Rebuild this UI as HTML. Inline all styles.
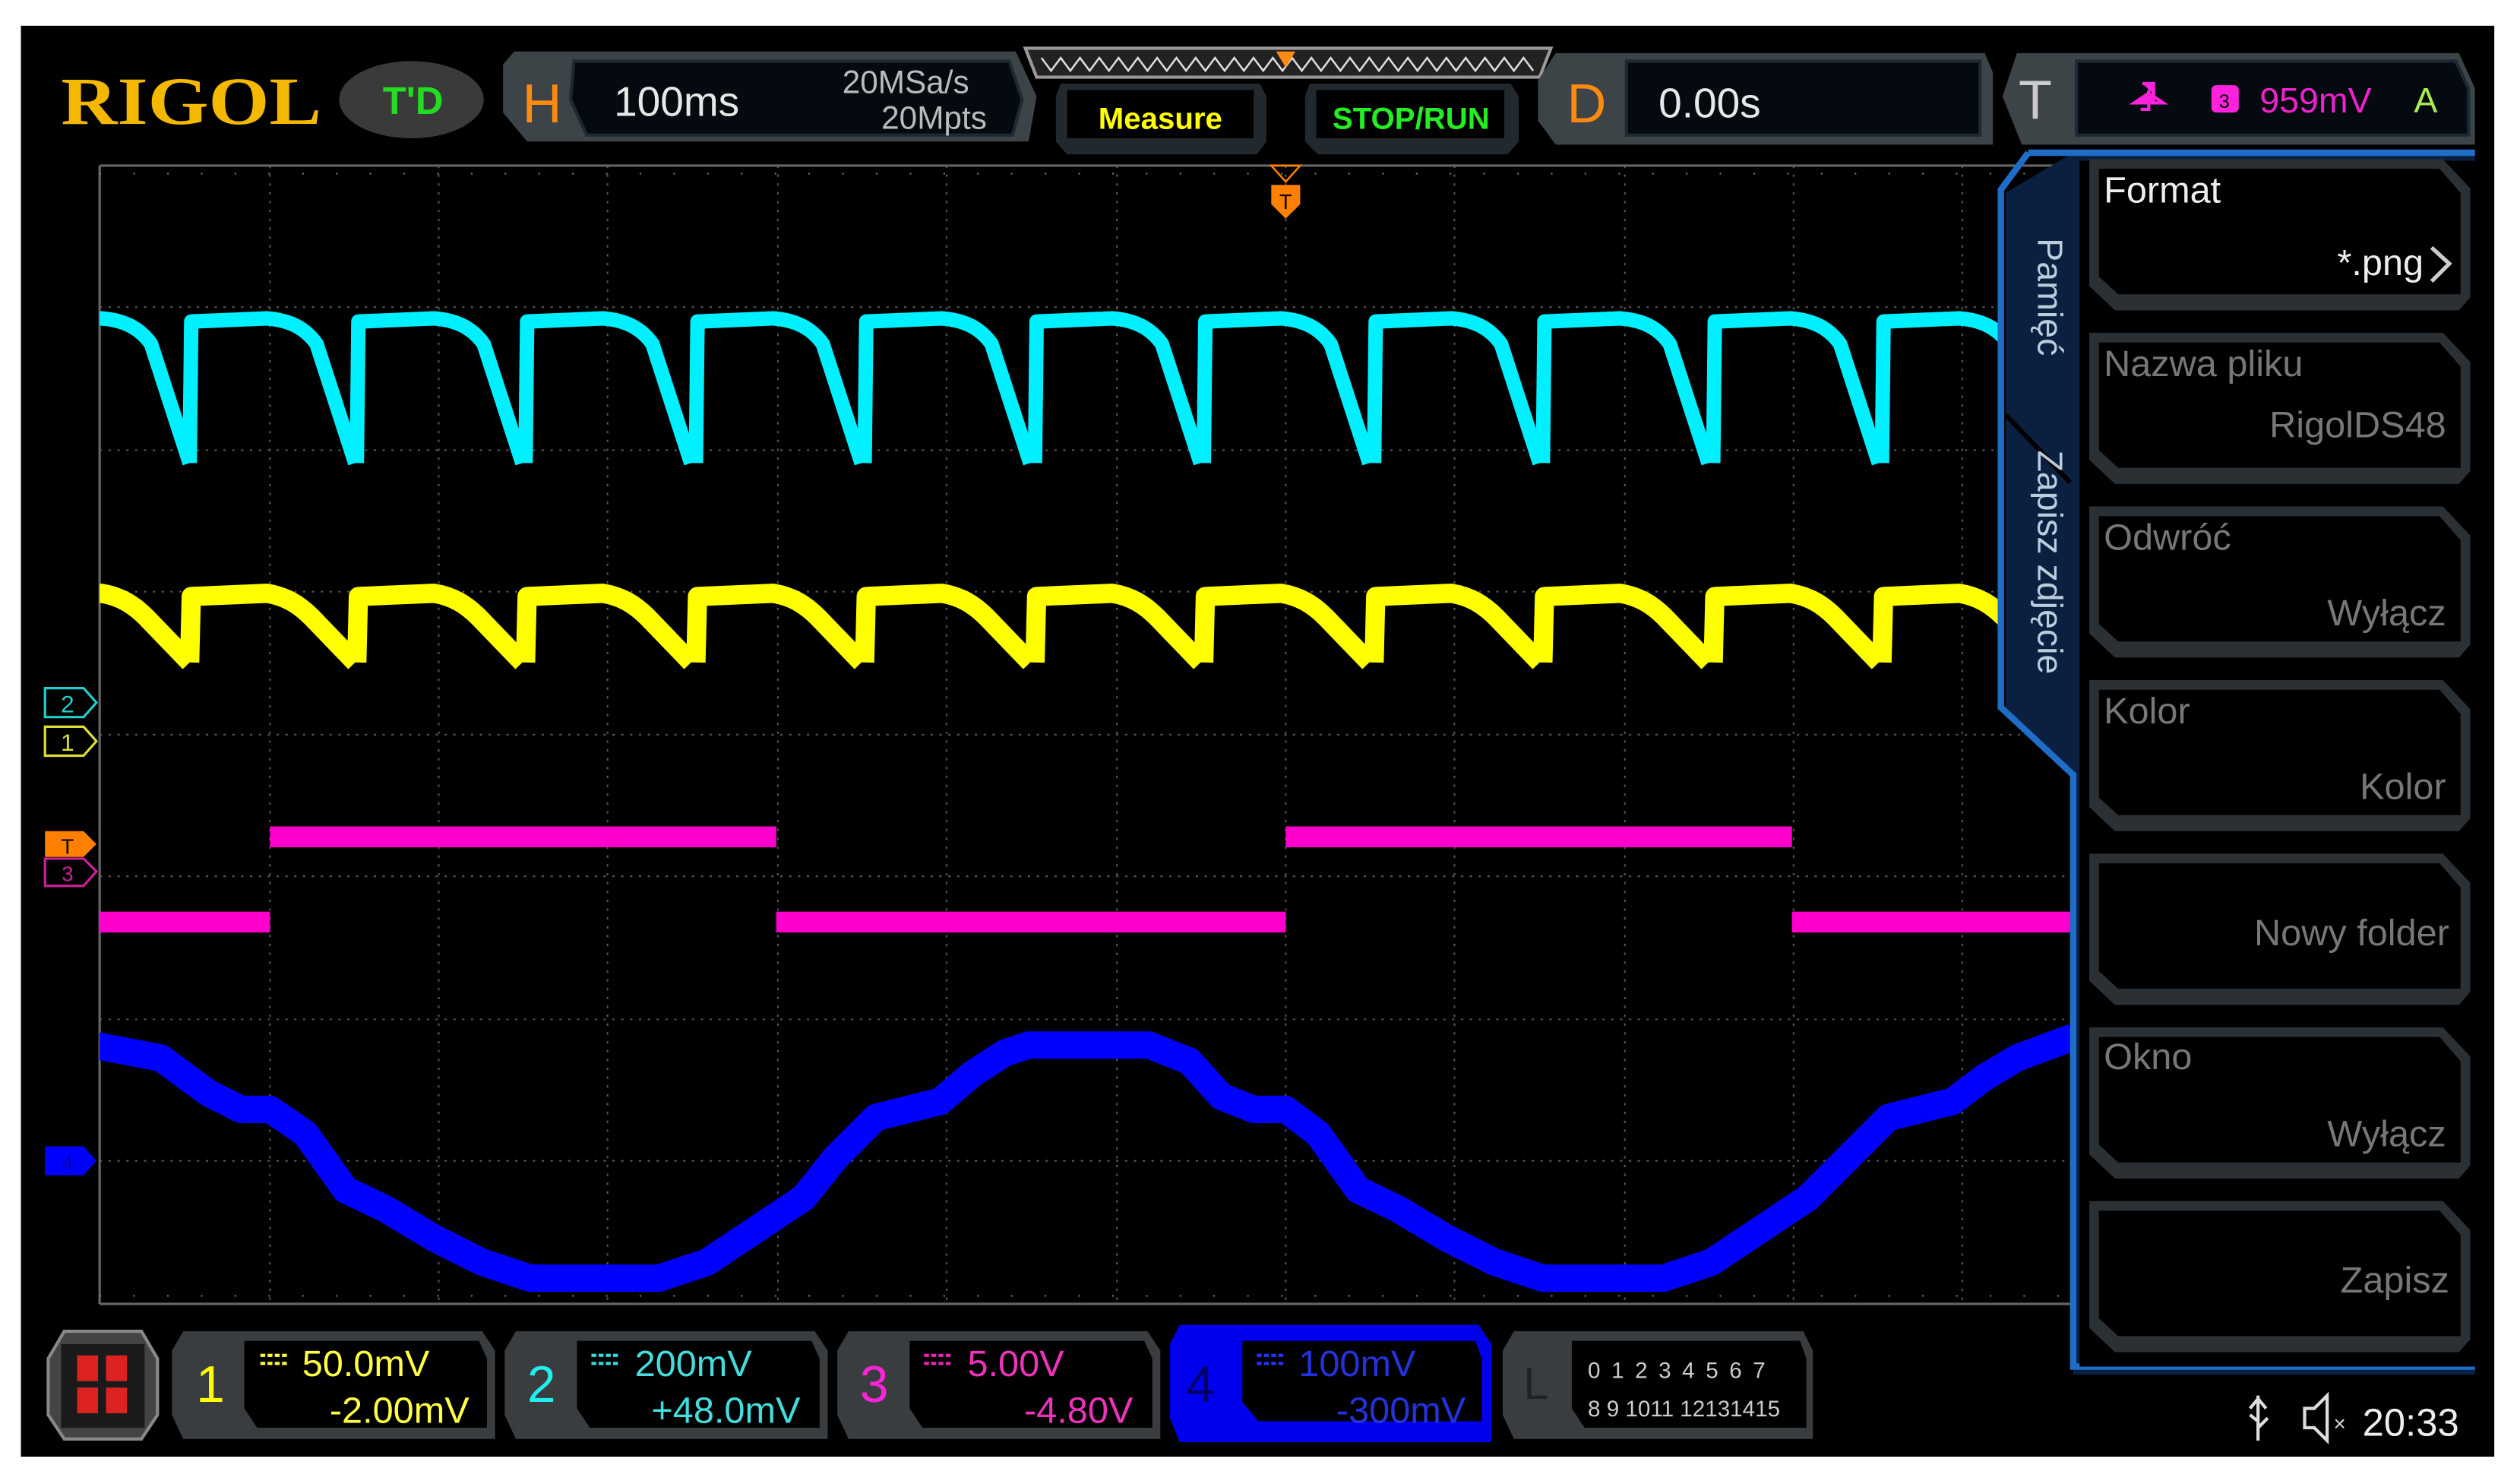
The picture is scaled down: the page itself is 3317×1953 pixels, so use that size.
<!DOCTYPE html>
<html><head><meta charset="utf-8"><style>
html,body{margin:0;padding:0;background:#fff;width:3317px;height:1953px;overflow:hidden}
svg{display:block}
text{font-family:"Liberation Sans",sans-serif}
</style></head><body>
<svg width="3317" height="1953" viewBox="0 0 1568 923" preserveAspectRatio="none" xmlns="http://www.w3.org/2000/svg">
<defs>
<clipPath id="gc"><rect x="62" y="103" width="1183" height="708"/></clipPath>
<clipPath id="gc2"><rect x="62" y="103" width="1226" height="708"/></clipPath>
<path id="cy" d="M0,288 L1,200 L48,198 C62,199 72,204 79,214 L103,288" fill="none" stroke="#00f0ff" stroke-width="9" stroke-linejoin="round"/>
<path id="ye" d="M0,412 L1,371 L48,369 C60,371 68,376 76,384 L103,412" fill="none" stroke="#ffff00" stroke-width="12" stroke-linejoin="round"/>
</defs>
<rect x="0" y="0" width="1568" height="923" fill="#fff"/>
<rect x="13" y="16" width="1539" height="890" fill="#000"/>

<g stroke="#555" stroke-width="1" stroke-dasharray="1.5,4">
<line x1="62" y1="191" x2="1288" y2="191"/><line x1="62" y1="280" x2="1288" y2="280"/>
<line x1="62" y1="368" x2="1288" y2="368"/><line x1="62" y1="457" x2="1288" y2="457"/>
<line x1="62" y1="545" x2="1288" y2="545"/><line x1="62" y1="634" x2="1288" y2="634"/>
<line x1="62" y1="722" x2="1288" y2="722"/>
<line x1="168" y1="103" x2="168" y2="811"/><line x1="273" y1="103" x2="273" y2="811"/>
<line x1="378" y1="103" x2="378" y2="811"/><line x1="484" y1="103" x2="484" y2="811"/>
<line x1="589" y1="103" x2="589" y2="811"/><line x1="695" y1="103" x2="695" y2="811"/>
<line x1="800" y1="103" x2="800" y2="811"/><line x1="905" y1="103" x2="905" y2="811"/>
<line x1="1011" y1="103" x2="1011" y2="811"/><line x1="1116" y1="103" x2="1116" y2="811"/>
<line x1="1221" y1="103" x2="1221" y2="811"/>
</g>
<g stroke="#666" stroke-width="1.5">
<line x1="62" y1="103" x2="1288" y2="103"/><line x1="62" y1="811" x2="1288" y2="811"/>
<line x1="62" y1="103" x2="62" y2="811"/>
</g>
<g stroke="#777" stroke-width="1" stroke-dasharray="1,20">
<line x1="62" y1="108" x2="1288" y2="108"/><line x1="62" y1="806" x2="1288" y2="806"/>
</g>

<g clip-path="url(#gc)">
<use href="#cy" x="15"/><use href="#cy" x="118"/><use href="#cy" x="222"/><use href="#cy" x="327"/><use href="#cy" x="433"/><use href="#cy" x="538"/><use href="#cy" x="644"/><use href="#cy" x="749"/><use href="#cy" x="855"/><use href="#cy" x="960"/><use href="#cy" x="1066"/><use href="#cy" x="1171"/>
<use href="#ye" x="15"/><use href="#ye" x="118"/><use href="#ye" x="222"/><use href="#ye" x="327"/><use href="#ye" x="433"/><use href="#ye" x="538"/><use href="#ye" x="644"/><use href="#ye" x="749"/><use href="#ye" x="855"/><use href="#ye" x="960"/><use href="#ye" x="1066"/><use href="#ye" x="1171"/>
</g>

<g fill="#ff00cc">
<rect x="62" y="567" width="106" height="13"/>
<rect x="168" y="514" width="315" height="13"/>
<rect x="483" y="567" width="317" height="13"/>
<rect x="800" y="514" width="315" height="13"/>
<rect x="1115" y="567" width="173" height="13"/>
</g>

<g clip-path="url(#gc2)">
<polyline fill="none" stroke="#0000ff" stroke-width="17" stroke-linejoin="round" points="58,650 100,658 130,680 150,690 168,690 190,705 215,740 240,752 270,770 300,785 330,795 410,795 440,785 470,765 500,745 520,720 545,695 565,690 585,685 605,668 625,655 640,650 715,650 740,660 760,682 780,690 800,690 820,705 845,740 870,752 900,770 930,785 960,795 1035,795 1065,785 1095,765 1125,745 1150,720 1175,695 1195,690 1215,685 1235,670 1255,658 1290,645"/>
</g>

<g font-size="15" text-anchor="middle">
<path d="M28,428 H52 L60,437 L52,446 H28 Z" fill="#000" stroke="#22cccc" stroke-width="1.5"/><text x="42" y="443" fill="#22cccc">2</text>
<path d="M28,452 H52 L60,461 L52,470 H28 Z" fill="#000" stroke="#dddd33" stroke-width="1.5"/><text x="42" y="467" fill="#dddd33">1</text>
<path d="M28,517 H52 L60,525 L52,533 H28 Z" fill="#ff8000"/><text x="42" y="531" fill="#000" font-size="13">T</text>
<path d="M28,534 H52 L60,542 L52,551 H28 Z" fill="#000" stroke="#cc2299" stroke-width="1.5"/><text x="42" y="548" fill="#cc2299" font-size="13">3</text>
<path d="M28,713 H52 L60,722 L52,731 H28 Z" fill="#0000ff"/><text x="42" y="728" fill="#0000aa" font-size="13">4</text>
</g>
<path d="M791,103 H809 L800,113 Z" fill="none" stroke="#ff8000" stroke-width="1.2"/>
<path d="M791,115 H809 V127 L800,136 L791,127 Z" fill="#ff8000"/>
<text x="800" y="130" fill="#000" font-size="13" text-anchor="middle">T</text>

<text x="38" y="77" fill="#f5b800" style="font-family:'Liberation Serif',serif;font-weight:bold" font-size="42" textLength="162" lengthAdjust="spacingAndGlyphs">RIGOL</text>
<ellipse cx="256" cy="62" rx="45" ry="24" fill="#3a3a3a"/>
<text x="257" y="71" fill="#22dd22" font-size="24" text-anchor="middle" font-weight="bold">T'D</text>

<path d="M320,32 H632 L645,60 L640,88 H328 L313,70 V40 Z" fill="#3c4448"/>
<path d="M357,38 H628 L636,62 L630,84 H365 L355,62 Z" fill="#050a10" stroke="#1e2a33" stroke-width="2"/>
<text x="325" y="76" fill="#ff8a10" font-size="34">H</text>
<text x="382" y="72" fill="#e8e8e8" font-size="26">100ms</text>
<text x="603" y="58" fill="#bbb" font-size="20" text-anchor="end">20MSa/s</text>
<text x="614" y="80" fill="#bbb" font-size="20" text-anchor="end">20Mpts</text>

<path d="M638,30 H965 L958,48 H645 Z" fill="#222" stroke="#999" stroke-width="2"/>
<polyline fill="none" stroke="#ddd" stroke-width="1.2" points="648,36 654,44 660,36 666,44 672,36 678,44 684,36 690,44 696,36 702,44 708,36 714,44 720,36 726,44 732,36 738,44 744,36 750,44 756,36 762,44 768,36 774,44 780,36 786,44 792,36 798,44 804,36 810,44 816,36 822,44 828,36 834,44 840,36 846,44 852,36 858,44 864,36 870,44 876,36 882,44 888,36 894,44 900,36 906,44 912,36 918,44 924,36 930,44 936,36 942,44 948,36 954,44"/>
<path d="M794,32 H806 L800,42 Z" fill="#ff8a10"/>

<path d="M660,52 H784 L788,60 V88 L782,96 H664 L657,88 V60 Z" fill="#22292e"/>
<path d="M664,56 H780 V86 H664 Z" fill="#000"/>
<text x="722" y="80" fill="#ffff00" font-size="19" font-weight="bold" text-anchor="middle">Measure</text>
<path d="M815,52 H940 L945,60 V88 L938,96 H820 L812,88 V60 Z" fill="#22292e"/>
<path d="M819,56 H936 V86 H819 Z" fill="#000"/>
<text x="878" y="80" fill="#22ee22" font-size="19" font-weight="bold" text-anchor="middle">STOP/RUN</text>

<path d="M968,33 H1235 L1240,45 V90 H968 L957,75 V50 Z" fill="#3c4448"/>
<path d="M1012,38 H1232 V84 H1012 Z" fill="#050a10" stroke="#1e2a33" stroke-width="2"/>
<text x="975" y="76" fill="#ff8a10" font-size="34">D</text>
<text x="1032" y="73" fill="#e8e8e8" font-size="26">0.00s</text>

<path d="M1255,33 H1530 L1540,55 V90 H1258 L1246,60 Z" fill="#3c4448"/>
<path d="M1292,38 H1528 L1536,55 V84 H1292 Z" fill="#050a10" stroke="#1e2a33" stroke-width="2"/>
<text x="1256" y="74" fill="#ccc" font-size="34">T</text>
<path d="M1333,52 H1340 V64 H1346 M1328,64 L1337,58 L1346,64 Z" fill="#ff22dd" stroke="#ff22dd" stroke-width="2"/>
<path d="M1332,68 H1337 V56" fill="none" stroke="#ff22dd" stroke-width="2"/>
<rect x="1376" y="53" width="17" height="17" rx="3" fill="#ff22dd"/>
<text x="1384" y="67" fill="#000" font-size="12" text-anchor="middle">3</text>
<text x="1406" y="70" fill="#ee22cc" font-size="22">959mV</text>
<text x="1502" y="70" fill="#aaee55" font-size="22">A</text>

<path d="M1290,95 H1540 V100 H1294 V850 H1540 V855 H1290 V480 L1248,440 V120 Z" fill="#0b2040"/>
<path d="M1262,95 L1245,118 V440 L1290,482 V850 H1540" fill="none" stroke="#1e6ec8" stroke-width="4"/>
<line x1="1262" y1="95" x2="1540" y2="95" stroke="#1e6ec8" stroke-width="4"/>
<line x1="1248" y1="258" x2="1288" y2="300" stroke="#000" stroke-width="3"/>
<text transform="translate(1268,148) rotate(90)" fill="#bcd" font-size="22">Pamięć</text>
<text transform="translate(1268,280) rotate(90)" fill="#bcd" font-size="22">Zapisz zdjęcie</text>
<rect x="1294" y="100" width="246" height="750" fill="#000"/>

<g>
<path d="M1300,99 H1520 L1537,117 V185 L1530,193 H1316 L1300,178 Z" fill="#2b3034"/>
<path d="M1306,105 H1518 L1531,120 V183 H1318 L1306,172 Z" fill="#000"/>
<path d="M1300,207 H1520 L1537,225 V293 L1530,301 H1316 L1300,286 Z" fill="#2b3034"/>
<path d="M1306,213 H1518 L1531,228 V291 H1318 L1306,280 Z" fill="#000"/>
<path d="M1300,315 H1520 L1537,333 V401 L1530,409 H1316 L1300,394 Z" fill="#2b3034"/>
<path d="M1306,321 H1518 L1531,336 V399 H1318 L1306,388 Z" fill="#000"/>
<path d="M1300,423 H1520 L1537,441 V509 L1530,517 H1316 L1300,502 Z" fill="#2b3034"/>
<path d="M1306,429 H1518 L1531,444 V507 H1318 L1306,496 Z" fill="#000"/>
<path d="M1300,531 H1520 L1537,549 V617 L1530,625 H1316 L1300,610 Z" fill="#2b3034"/>
<path d="M1306,537 H1518 L1531,552 V615 H1318 L1306,604 Z" fill="#000"/>
<path d="M1300,639 H1520 L1537,657 V725 L1530,733 H1316 L1300,718 Z" fill="#2b3034"/>
<path d="M1306,645 H1518 L1531,660 V723 H1318 L1306,712 Z" fill="#000"/>
<path d="M1300,747 H1520 L1537,765 V833 L1530,841 H1316 L1300,826 Z" fill="#2b3034"/>
<path d="M1306,753 H1518 L1531,768 V831 H1318 L1306,820 Z" fill="#000"/>
</g>
<g font-size="23">
<text x="1309" y="126" fill="#eee">Format</text>
<text x="1508" y="171" fill="#eee" text-anchor="end">*.png</text>
<path d="M1513,154 L1524,164 L1513,175" fill="none" stroke="#ccc" stroke-width="2.5"/>
<text x="1309" y="234" fill="#777">Nazwa pliku</text>
<text x="1522" y="272" fill="#777" text-anchor="end">RigolDS48</text>
<text x="1309" y="342" fill="#777">Odwróć</text>
<text x="1522" y="389" fill="#777" text-anchor="end">Wyłącz</text>
<text x="1309" y="450" fill="#777">Kolor</text>
<text x="1522" y="497" fill="#777" text-anchor="end">Kolor</text>
<text x="1524" y="588" fill="#777" text-anchor="end">Nowy folder</text>
<text x="1309" y="665" fill="#777">Okno</text>
<text x="1522" y="713" fill="#777" text-anchor="end">Wyłącz</text>
<text x="1524" y="804" fill="#777" text-anchor="end">Zapisz</text>
</g>

<path d="M40,828 H88 L98,845 V880 L88,895 H40 L30,880 V845 Z" fill="#444" stroke="#888" stroke-width="2"/>
<rect x="38" y="836" width="52" height="52" fill="#1a1a1a"/>
<g fill="#dd2222"><rect x="48" y="843" width="13" height="16"/><rect x="66" y="843" width="13" height="16"/><rect x="48" y="863" width="13" height="16"/><rect x="66" y="863" width="13" height="16"/></g>

<g font-size="23">
<path d="M114,828 H300 L308,840 V895 H114 L107,880 V840 Z" fill="#3a3d40"/>
<path d="M152,834 H298 L303,845 V888 H160 L152,876 Z" fill="#000"/>
<text x="122" y="872" fill="#ffff00" font-size="32">1</text>
<path d="M162,843 H180 M162,848 H180" stroke="#ffff33" stroke-width="2" stroke-dasharray="3,1.5"/>
<text x="188" y="856" fill="#ffff44">50.0mV</text>
<text x="292" y="885" fill="#ffff44" text-anchor="end">-2.00mV</text>

<path d="M321,828 H507 L515,840 V895 H321 L314,880 V840 Z" fill="#3a3d40"/>
<path d="M359,834 H505 L510,845 V888 H367 L359,876 Z" fill="#000"/>
<text x="328" y="872" fill="#22eeee" font-size="32">2</text>
<path d="M368,843 H386 M368,848 H386" stroke="#33dddd" stroke-width="2" stroke-dasharray="3,1.5"/>
<text x="395" y="856" fill="#44dddd">200mV</text>
<text x="498" y="885" fill="#44dddd" text-anchor="end">+48.0mV</text>

<path d="M528,828 H714 L722,840 V895 H528 L521,880 V840 Z" fill="#3a3d40"/>
<path d="M566,834 H712 L717,845 V888 H574 L566,876 Z" fill="#000"/>
<text x="535" y="872" fill="#ff22dd" font-size="32">3</text>
<path d="M575,843 H593 M575,848 H593" stroke="#ee22bb" stroke-width="2" stroke-dasharray="3,1.5"/>
<text x="602" y="856" fill="#ee33bb">5.00V</text>
<text x="705" y="885" fill="#ee33bb" text-anchor="end">-4.80V</text>

<path d="M734,824 H920 L928,836 V897 H734 L728,882 V836 Z" fill="#0000ee"/>
<path d="M773,834 H918 L922,845 V884 H783 L773,872 Z" fill="#000"/>
<text x="738" y="872" fill="#000066" font-size="32">4</text>
<path d="M782,843 H800 M782,848 H800" stroke="#2233ff" stroke-width="2" stroke-dasharray="3,1.5"/>
<text x="808" y="856" fill="#2233dd">100mV</text>
<text x="912" y="885" fill="#2233dd" text-anchor="end">-300mV</text>

<path d="M942,828 H1122 L1128,840 V895 H942 L935,880 V840 Z" fill="#3a3d40"/>
<path d="M978,834 H1120 L1124,845 V888 H986 L978,876 Z" fill="#000"/>
<text x="948" y="870" fill="#222" font-size="28">L</text>
<text x="988" y="857" fill="#ccc" font-size="14" letter-spacing="1.5">0 1 2 3  4 5 6 7</text>
<text x="988" y="881" fill="#ccc" font-size="14">8 9 1011 12131415</text>
</g>

<path d="M1405,868 V896 M1400,876 L1405,870 L1410,876 M1405,884 L1400,880 M1405,888 L1411,882" stroke="#ddd" stroke-width="2" fill="none"/>
<path d="M1434,876 H1440 L1448,868 V896 L1440,888 H1434 Z" fill="none" stroke="#ddd" stroke-width="2"/>
<text x="1452" y="890" fill="#ddd" font-size="13">×</text>
<text x="1470" y="893" fill="#eee" font-size="24">20:33</text>
</svg>
</body></html>
